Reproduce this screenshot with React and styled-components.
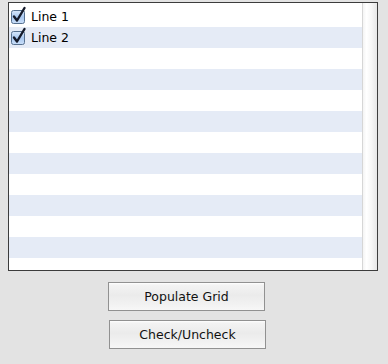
import React from "react";
import styled, { createGlobalStyle } from "styled-components";

const Global = createGlobalStyle`
  html, body { margin: 0; padding: 0; background: #e3e3e3; }
  body { font-family: "DejaVu Sans", "Liberation Sans", sans-serif; }
`;

const Page = styled.div`
  width: 388px;
  height: 364px;
  padding: 2px 0 0 8px;
  box-sizing: border-box;
  display: flex;
  flex-direction: column;
`;

const Grid = styled.div`
  width: 370px;
  height: 269px;
  box-sizing: border-box;
  border: 1px solid #3c3c3c;
  background: #ffffff;
  display: flex;
  overflow: hidden;
`;

const Rows = styled.div`
  flex: 1;
  padding-top: 3px;
  display: flex;
  flex-direction: column;
  overflow: hidden;
`;

const Row = styled.div`
  flex: 0 0 21px;
  height: 21px;
  display: flex;
  align-items: center;
  gap: 4px;
  padding-left: 2px;
  background: ${(p) => (p.$alt ? "#e5ebf6" : "#ffffff")};
  font-size: 12.5px;
  color: #000;
`;

const Scrollbar = styled.div`
  width: 15px;
  flex: 0 0 15px;
  border-left: 1px solid #d6d6d6;
  box-sizing: border-box;
  background: linear-gradient(to right, #f4f4f4 0%, #ffffff 25%, #f6f6f6 60%, #e6e6e6 100%);
`;

const Buttons = styled.div`
  display: flex;
  flex-direction: column;
  align-items: flex-start;
  gap: 9px;
  margin-top: 11px;
  padding-left: 100px;
`;

const Button = styled.button`
  width: 157px;
  height: 29px;
  margin-left: ${(p) => p.$shift || 0}px;
  box-sizing: border-box;
  border: 1px solid #919191;
  border-radius: 0;
  background: linear-gradient(to bottom, #ffffff 0px, #f3f3f3 2px, #ebebeb 45%, #f2f2f2 80%, #f7f7f7 100%);
  font-family: "DejaVu Sans", "Liberation Sans", sans-serif;
  font-size: 12.5px;
  color: #111;
  padding: 0;
  display: flex;
  align-items: center;
  justify-content: center;
`;

const Check = () => (
  <svg width="16" height="18" viewBox="0 0 16 18" style={{ marginTop: -3 }}>
    <defs>
      <linearGradient id="cbg" x1="0" y1="0" x2="0" y2="1">
        <stop offset="0" stopColor="#d9e8fb" />
        <stop offset="0.5" stopColor="#a9c8f0" />
        <stop offset="1" stopColor="#c9def8" />
      </linearGradient>
    </defs>
    <rect x="0.5" y="4.5" width="13" height="13" rx="2" fill="url(#cbg)" stroke="#56708f" />
    <path d="M3 10.5 L6 14.5 L13.5 2" fill="none" stroke="#151a2a" strokeWidth="2.4" strokeLinecap="round" strokeLinejoin="round" />
  </svg>
);

const data = ["Line 1", "Line 2"];

export default function App() {
  const rows = Array.from({ length: 13 }, (_, i) => i);
  return (
    <>
      <Global />
      <Page>
        <Grid>
          <Rows>
            {rows.map((i) => (
              <Row key={i} $alt={i % 2 === 1}>
                {data[i] && (
                  <>
                    <Check />
                    <span>{data[i]}</span>
                  </>
                )}
              </Row>
            ))}
          </Rows>
          <Scrollbar />
        </Grid>
        <Buttons>
          <Button>Populate Grid</Button>
          <Button $shift={1}>Check/Uncheck</Button>
        </Buttons>
      </Page>
    </>
  );
}
